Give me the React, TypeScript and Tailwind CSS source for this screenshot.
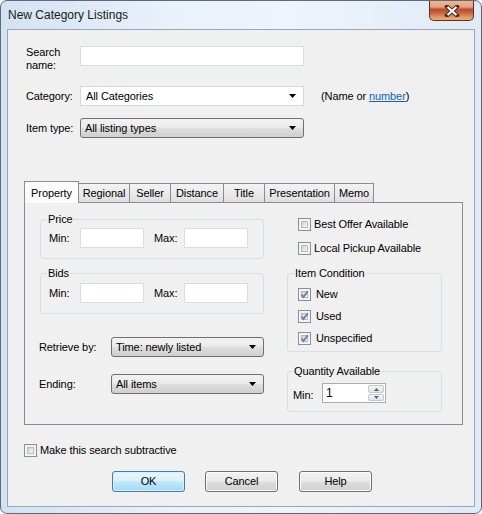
import type { ReactNode } from 'react';

const Arrow = () => (
  <svg width="7" height="4" viewBox="0 0 7 4" className="shrink-0">
    <path d="M0 0h7L3.5 4z" fill="#000" />
  </svg>
);

const TextBox = ({ className = '', children }: { className?: string; children?: ReactNode }) => (
  <div className={`h-[20px] bg-white border border-[#d8dde4] flex items-center ${className}`}>{children}</div>
);

const ListCombo = ({ className = '', value }: { className?: string; value: string }) => (
  <div
    className={`h-[20px] rounded-[3px] border border-[#707070] bg-[linear-gradient(180deg,#f2f2f2_0%,#ebebeb_45%,#dddddd_55%,#cfcfcf_100%)] flex items-center pl-[4px] pr-[7px] ${className}`}
  >
    <span className="flex-1 leading-[13px]">{value}</span>
    <Arrow />
  </div>
);

const CheckBox = ({ checked = false }: { checked?: boolean }) => (
  <div className="relative w-[13px] h-[13px] shrink-0 border border-[#8e8f8f] bg-[#f4f4f4] p-[2px]">
    <div className="w-full h-full border border-[#b7bcc2] bg-[linear-gradient(135deg,#c9ced4_0%,#e4e6e9_55%,#f7f7f7_100%)]" />
    {checked && (
      <svg width="11" height="11" viewBox="0 0 11 11" className="absolute left-0 top-0">
        <path d="M2.5 5.5 L4.5 8 L8.8 2.2" fill="none" stroke="#5b7db5" strokeWidth="1.7" />
      </svg>
    )}
  </div>
);

const Button = ({ label, isDefault = false }: { label: string; isDefault?: boolean }) => (
  <div
    className={`w-[73px] h-[21px] rounded-[3px] border flex items-center justify-center ${
      isDefault
        ? 'border-[#3c7fb1] bg-[linear-gradient(180deg,#eaf6fd_0%,#d9f0fc_45%,#bee6fd_55%,#a7d9f5_100%)] shadow-[inset_0_0_0_1px_#dcefff]'
        : 'border-[#707070] bg-[linear-gradient(180deg,#f2f2f2_0%,#ebebeb_45%,#dddddd_55%,#cfcfcf_100%)] shadow-[inset_0_0_0_1px_#fcfcfc]'
    }`}
  >
    {label}
  </div>
);

const tabs = [
  { label: 'Regional', w: 'w-[52px]' },
  { label: 'Seller', w: 'w-[42px]' },
  { label: 'Distance', w: 'w-[54px]' },
  { label: 'Title', w: 'w-[42px]' },
  { label: 'Presentation', w: 'w-[71px]' },
  { label: 'Memo', w: 'w-[40px]' },
];

export default function App() {
  return (
    <div className="w-[482px] h-[514px] font-['Liberation_Sans',Arial,sans-serif] text-[11px] tracking-[-0.1px] text-black">
      <div className="relative w-[482px] h-[514px] rounded-[7px] border border-[#5b6a7d] bg-[linear-gradient(90deg,#d3e2f2_0%,#e9f1fa_35%,#eef4fb_60%,#dfeaf6_100%)] flex flex-col">
        {/* title bar */}
        <div className="h-[28px] flex items-center pl-[7px] text-[12px] tracking-normal text-[#1a1a1a]">New Category Listings</div>
        <div className="absolute top-0 right-[7px] w-[45px] h-[20px] rounded-b-[5px] border border-t-0 border-[#5e2c22] bg-[linear-gradient(180deg,#eab894_0%,#e4a57c_30%,#b94b36_45%,#c65e3e_60%,#dc8f5c_80%,#e9b07c_100%)] flex items-center justify-center">
          <svg width="16" height="12" viewBox="0 0 16 12">
            <path d="M3 1.5 L13 10.5 M13 1.5 L3 10.5" stroke="#4a2a22" strokeWidth="4" strokeLinecap="square" />
            <path d="M3.5 2 L12.5 10 M12.5 2 L3.5 10" stroke="#ffffff" strokeWidth="2.2" />
          </svg>
        </div>

        {/* client area */}
        <div className="ml-[6px] w-[468px] h-[478px] border border-[#9ba6b3] bg-[#f0f0f0] flex flex-col">
          {/* search name */}
          <div className="mt-[16px] ml-[18px] flex items-start">
            <span className="w-[54px] leading-[13px]">
              Search
              <br />
              name:
            </span>
            <TextBox className="w-[224px] border-[#a6c7e7]" />
          </div>

          {/* category */}
          <div className="mt-[14px] ml-[18px] flex items-center">
            <span className="w-[54px]">Category:</span>
            <div className="w-[224px] h-[20px] bg-white border border-[#d3d8de] flex items-center pl-[5px] pr-[7px]">
              <span className="flex-1">All Categories</span>
              <Arrow />
            </div>
            <span className="ml-[17px]">
              (Name or <span className="text-[#0b63c9] underline">number</span>)
            </span>
          </div>

          {/* item type */}
          <div className="mt-[12px] ml-[18px] flex items-center">
            <span className="w-[54px]">Item type:</span>
            <ListCombo className="w-[224px]" value="All listing types" />
          </div>

          {/* tab strip */}
          <div className="mt-[43px] ml-[16px] h-[21px] flex items-end">
            <div className="relative z-10 w-[55px] h-[22px] -mb-px border border-b-0 border-[#898c95] bg-[#fcfcfc] flex items-start justify-center pt-[3px]">
              Property
            </div>
            {tabs.map(t => (
              <div
                key={t.label}
                className={`${t.w} h-[19px] border border-b-0 border-[#898c95] bg-[linear-gradient(180deg,#f3f3f3_0%,#ebebeb_50%,#dedede_100%)] flex items-center justify-center -ml-px first:ml-0`}
              >
                {t.label}
              </div>
            ))}
          </div>

          {/* tab panel */}
          <div className="ml-[16px] w-[439px] h-[223px] border border-[#898c95] bg-[#f0f0f0] flex">
            {/* left column */}
            <div className="ml-[14px] w-[226px] flex flex-col">
              <fieldset className="ml-px mt-[10px] w-[224px] border border-[#d5dfe5] rounded-[3px] px-[7px] pt-[2px] pb-[10px]">
                <legend className="px-px -ml-px leading-[13px]">Price</legend>
                <div className="flex items-center">
                  <span className="ml-px w-[31px]">Min:</span>
                  <TextBox className="w-[64px]" />
                  <span className="ml-[10px] w-[30px]">Max:</span>
                  <TextBox className="w-[64px]" />
                </div>
              </fieldset>
              <fieldset className="ml-px mt-[8px] w-[224px] border border-[#d5dfe5] rounded-[3px] px-[7px] pt-[3px] pb-[10px]">
                <legend className="px-px -ml-px leading-[13px]">Bids</legend>
                <div className="flex items-center">
                  <span className="ml-px w-[31px]">Min:</span>
                  <TextBox className="w-[64px]" />
                  <span className="ml-[10px] w-[30px]">Max:</span>
                  <TextBox className="w-[64px]" />
                </div>
              </fieldset>
              <div className="mt-[23px] flex items-center">
                <span className="w-[72px]">Retrieve by:</span>
                <ListCombo className="w-[153px]" value="Time: newly listed" />
              </div>
              <div className="mt-[17px] flex items-center">
                <span className="w-[72px]">Ending:</span>
                <ListCombo className="w-[153px]" value="All items" />
              </div>
            </div>

            {/* right column */}
            <div className="ml-[22px] w-[155px] flex flex-col">
              <div className="mt-[15px] pl-[11px] flex items-center leading-[13px]">
                <CheckBox />
                <span className="ml-[3px]">Best Offer Available</span>
              </div>
              <div className="mt-[11px] pl-[11px] flex items-center leading-[13px]">
                <CheckBox />
                <span className="ml-[3px]">Local Pickup Available</span>
              </div>
              <fieldset className="mt-[12px] w-[155px] border border-[#d5dfe5] rounded-[3px] px-[7px] pt-[8px] pb-[6px]">
                <legend className="px-px -ml-px leading-[13px]">Item Condition</legend>
                <div className="pl-[3px] flex items-center leading-[13px]">
                  <CheckBox checked />
                  <span className="ml-[5px]">New</span>
                </div>
                <div className="mt-[9px] pl-[3px] flex items-center leading-[13px]">
                  <CheckBox checked />
                  <span className="ml-[5px]">Used</span>
                </div>
                <div className="mt-[9px] pl-[3px] flex items-center leading-[13px]">
                  <CheckBox checked />
                  <span className="ml-[5px]">Unspecified</span>
                </div>
              </fieldset>
              <fieldset className="mt-[13px] w-[155px] border border-[#d5dfe5] rounded-[3px] px-[7px] pt-[5px] pb-[7px]">
                <legend className="-ml-[2px] px-px leading-[13px]">Quantity Available</legend>
                <div className="-ml-[2px] flex items-center">
                  <span className="w-[29px] mt-[4px]">Min:</span>
                  <div className="w-[64px] h-[20px] bg-white border border-[#abadb3] flex items-stretch">
                    <span className="flex-1 pl-[3px] text-[12px] leading-[18px]">1</span>
                    <div className="w-[16px] my-[1px] mr-[1px] flex flex-col gap-px">
                      <div className="flex-1 rounded-[2px] border border-[#c3c9d0] bg-[linear-gradient(180deg,#f6f6f6,#e1e4e8)] flex items-center justify-center">
                        <svg width="5" height="3" viewBox="0 0 5 3">
                          <path d="M0 3h5L2.5 0z" fill="#4d6185" />
                        </svg>
                      </div>
                      <div className="flex-1 rounded-[2px] border border-[#c3c9d0] bg-[linear-gradient(180deg,#f6f6f6,#e1e4e8)] flex items-center justify-center">
                        <svg width="5" height="3" viewBox="0 0 5 3">
                          <path d="M0 0h5L2.5 3z" fill="#4d6185" />
                        </svg>
                      </div>
                    </div>
                  </div>
                </div>
              </fieldset>
            </div>
          </div>

          {/* subtractive */}
          <div className="mt-[19px] ml-[16px] flex items-center leading-[13px]">
            <CheckBox />
            <span className="ml-[3px]">Make this search subtractive</span>
          </div>

          {/* buttons */}
          <div className="mt-[14px] ml-[104px] flex">
            <Button label="OK" isDefault />
            <div className="ml-[20px]">
              <Button label="Cancel" />
            </div>
            <div className="ml-[21px]">
              <Button label="Help" />
            </div>
          </div>
        </div>
      </div>
    </div>
  );
}
